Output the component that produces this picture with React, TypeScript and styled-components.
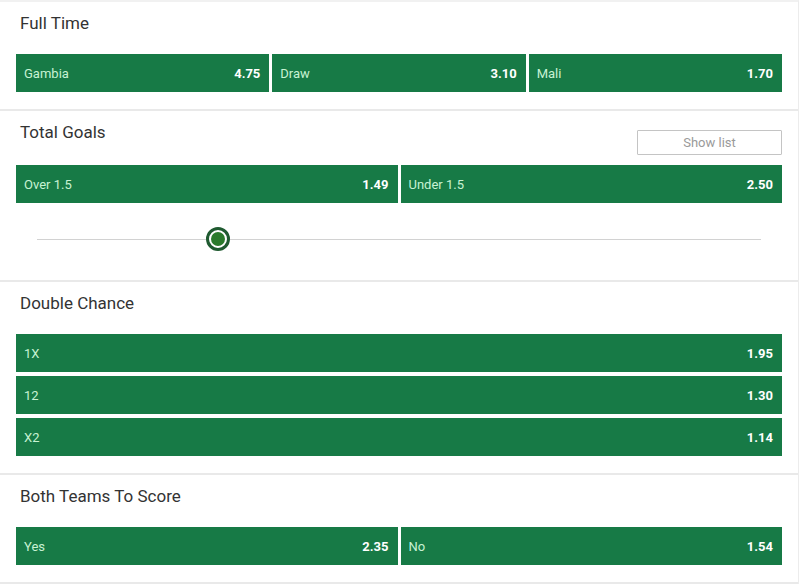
import React from "react";
import styled, { createGlobalStyle } from "styled-components";

const Global = createGlobalStyle`
  html, body { margin: 0; padding: 0; background: #ffffff; }
  body { font-family: Roboto, "Noto Sans", "Liberation Sans", sans-serif; }
`;

const Card = styled.div`
  width: 798px;
  border-right: 1px solid #ececec;
  border-top: 2px solid #f1f1f1;
  background: #fff;
`;

const Section = styled.section<{ $flush?: boolean }>`
  border-bottom: 2px solid #e9e9e9;
  padding: 0 16px ${(p) => (p.$flush ? "0" : "17px")} 16px;
`;

const Header = styled.div`
  display: flex;
  justify-content: space-between;
  align-items: flex-start;
  min-height: 52px;
`;

const Title = styled.h2`
  margin: 0;
  padding: 11px 0 0 4px;
  font-size: 17px;
  line-height: 21px;
  font-weight: 400;
  color: #333;
`;

const ShowList = styled.button`
  margin: 19px 0 10px 0;
  width: 145px;
  height: 25px;
  border: 1px solid #c4c4c4;
  border-radius: 1px;
  background: #fff;
  color: #9a9a9a;
  font-family: inherit;
  font-size: 13px;
  padding: 0;
`;

const Row = styled.div<{ $cols: number }>`
  display: grid;
  grid-template-columns: repeat(${(p) => p.$cols}, 1fr);
  column-gap: 3px;
`;

const Stack = styled.div`
  display: flex;
  flex-direction: column;
  gap: 4px;
`;

const Odd = styled.div`
  display: flex;
  justify-content: space-between;
  align-items: center;
  height: 38px;
  padding: 0 9px 0 8px;
  background: #177a46;
  box-sizing: border-box;
`;

const Label = styled.span`
  color: #c8f2d3;
  font-size: 13px;
`;

const Price = styled.span`
  color: #ffffff;
  font-size: 13px;
  font-weight: 700;
`;

const SliderWrap = styled.div`
  height: 77px;
  box-sizing: border-box;
  padding: 36px 21px 0 21px;
`;

const Track = styled.div`
  position: relative;
  height: 1px;
  background: #d2d2d2;
`;

const Thumb = styled.div`
  position: absolute;
  top: 0;
  width: 24px;
  height: 24px;
  border-radius: 50%;
  box-sizing: border-box;
  border: 3px solid #1f5a30;
  background: #fff;
  transform: translate(-50%, -50%);
  display: flex;
  align-items: center;
  justify-content: center;
  &::after {
    content: "";
    width: 14px;
    height: 14px;
    border-radius: 50%;
    background: #2a7a2c;
  }
`;

type O = { l: string; p: string };

const OddBtn = ({ l, p }: O) => (
  <Odd>
    <Label>{l}</Label>
    <Price>{p}</Price>
  </Odd>
);

export default function App() {
  const fullTime: O[] = [
    { l: "Gambia", p: "4.75" },
    { l: "Draw", p: "3.10" },
    { l: "Mali", p: "1.70" },
  ];
  const goals: O[] = [
    { l: "Over 1.5", p: "1.49" },
    { l: "Under 1.5", p: "2.50" },
  ];
  const dc: O[] = [
    { l: "1X", p: "1.95" },
    { l: "12", p: "1.30" },
    { l: "X2", p: "1.14" },
  ];
  const btts: O[] = [
    { l: "Yes", p: "2.35" },
    { l: "No", p: "1.54" },
  ];
  return (
    <>
      <Global />
      <Card>
        <Section>
          <Header>
            <Title>Full Time</Title>
          </Header>
          <Row $cols={3}>
            {fullTime.map((o) => (
              <OddBtn key={o.l} {...o} />
            ))}
          </Row>
        </Section>
        <Section $flush>
          <Header>
            <Title>Total Goals</Title>
            <ShowList>Show list</ShowList>
          </Header>
          <Row $cols={2}>
            {goals.map((o) => (
              <OddBtn key={o.l} {...o} />
            ))}
          </Row>
          <SliderWrap>
            <Track>
              <Thumb style={{ left: "25%" }} />
            </Track>
          </SliderWrap>
        </Section>
        <Section>
          <Header>
            <Title>Double Chance</Title>
          </Header>
          <Stack>
            {dc.map((o) => (
              <OddBtn key={o.l} {...o} />
            ))}
          </Stack>
        </Section>
        <Section>
          <Header>
            <Title>Both Teams To Score</Title>
          </Header>
          <Row $cols={2}>
            {btts.map((o) => (
              <OddBtn key={o.l} {...o} />
            ))}
          </Row>
        </Section>
      </Card>
    </>
  );
}
